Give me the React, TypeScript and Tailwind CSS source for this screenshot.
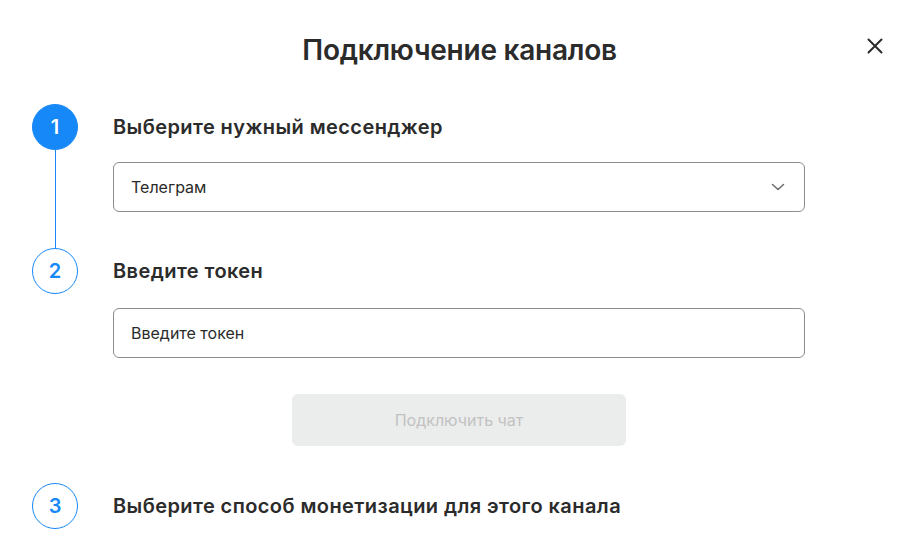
import React from 'react';

const BLUE = 'border-[#1688f7]';

const StepCircle: React.FC<{ n: number; active?: boolean }> = ({ n, active }) => (
  <div
    className={`w-[46px] h-[46px] rounded-full flex items-center justify-center text-[20px] font-semibold border ${BLUE} ${
      active ? 'bg-[#1688f7] text-white' : 'bg-white text-[#1688f7]'
    }`}
  >
    {n}
  </div>
);

const StepHeading: React.FC<{ n: number; active?: boolean; title: string }> = ({ n, active, title }) => (
  <div className="flex items-center h-[46px]">
    <div className="w-[113px] pl-[32px] shrink-0">
      <StepCircle n={n} active={active} />
    </div>
    <h3 className="text-[20px] font-semibold text-[#2b2b2b] tracking-[0.42px]">{title}</h3>
  </div>
);

const App: React.FC = () => {
  return (
    <div className="w-[907px] h-[558px] bg-white relative overflow-hidden" style={{ fontFamily: 'Inter, "Noto Sans", sans-serif' }}>
      <div className="pt-[32px] text-center pl-[12px]">
        <h2 className="text-[28px] leading-[36px] font-semibold text-[#2b2b2b] tracking-[-0.25px]">Подключение каналов</h2>
      </div>
      <button className="absolute right-[24px] top-[38px] text-[#2b2b2b]" aria-label="Закрыть">
        <svg width="16" height="16" viewBox="0 0 16 16" fill="none" stroke="currentColor" strokeWidth="2" strokeLinecap="round">
          <path d="M1.5 1.5l13 13M14.5 1.5l-13 13" />
        </svg>
      </button>

      <div className="mt-[36px] pr-[102px]">
        <StepHeading n={1} active title="Выберите нужный мессенджер" />
        <div className="flex">
          <div className="w-[113px] shrink-0 pl-[32px]">
            <div className="w-[46px] h-full flex justify-center">
              <div className="w-px h-full bg-[#1688f7]" />
            </div>
          </div>
          <div className="flex-1 pt-[12px] pb-[36px]">
            <div className="h-[50px] border border-[#8c8c8c] rounded-[6px] flex items-center justify-between pl-[17px] pr-[19px] text-[16px] text-[#2b2b2b]">
              <span>Телеграм</span>
              <svg width="14" height="8" viewBox="0 0 14 8" fill="none" stroke="#6b6b6b" strokeWidth="1.5" strokeLinecap="round" strokeLinejoin="round">
                <path d="M1.5 1.5L7 6.5l5.5-5" />
              </svg>
            </div>
          </div>
        </div>

        <StepHeading n={2} title="Введите токен" />
        <div className="pl-[113px] pt-[14px]">
          <div className="h-[50px] border border-[#8c8c8c] rounded-[6px] flex items-center pl-[17px] text-[16px] text-[#2b2b2b]">
            Введите токен
          </div>
          <div className="flex justify-center pt-[36px] pb-[37px]">
            <button disabled className="w-[334px] h-[52px] rounded-[6px] bg-[#ebecec] text-[16px] text-[#c2c2c2]">
              Подключить чат
            </button>
          </div>
        </div>

        <StepHeading n={3} title="Выберите способ монетизации для этого канала" />
      </div>
    </div>
  );
};

export default App;
